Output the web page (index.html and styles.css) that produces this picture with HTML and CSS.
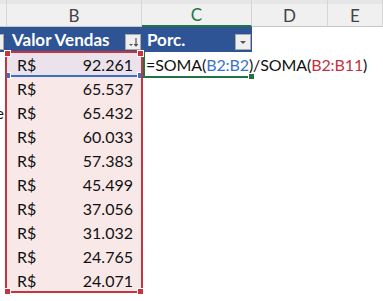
FILE: index.html
```html
<!DOCTYPE html>
<html lang="pt-BR">
<head>
    <meta charset="UTF-8">
    <title>Vendas</title>
    <link rel="stylesheet" href="styles.css">
</head>
<body>
    <div class="sheet">
        <!-- column letters -->
        <div class="row row-cols">
            <div class="col"></div>
            <div class="col">B</div>
            <div class="col col-active">C</div>
            <div class="col">D</div>
            <div class="col">E</div>
        </div>

        <!-- table header -->
        <div class="row row-head">
            <div class="cell th th-edge"><span class="dd"></span></div>
            <div class="cell th">Valor Vendas
                <span class="dd">
                    <svg width="14" height="14" viewBox="0 0 14 14">
                        <path d="M3 9h4l-2 2z" fill="#555"/>
                        <path d="M10 3v8M8.3 9.2L10 11l1.7-1.8" stroke="#444" stroke-width="1.1" fill="none"/>
                    </svg>
                </span>
            </div>
            <div class="cell th">Porc.
                <span class="dd">
                    <svg width="14" height="14" viewBox="0 0 14 14">
                        <path d="M4 6h6l-3 3z" fill="#555"/>
                    </svg>
                </span>
            </div>
            <div class="cell"></div>
            <div class="cell"></div>
        </div>

        <div class="row">
            <div class="cell"></div>
            <div class="cell money money-first"><span>R$</span><span>92.261</span></div>
            <div class="cell formula">=SOMA(<span class="ref-b">B2:B2</span>)/SOMA(<span class="ref-r">B2:B11</span>)</div>
            <div class="cell"></div>
            <div class="cell"></div>
        </div>
        <div class="row">
            <div class="cell"></div>
            <div class="cell money"><span>R$</span><span>65.537</span></div>
            <div class="cell"></div><div class="cell"></div><div class="cell"></div>
        </div>
        <div class="row">
            <div class="cell clip">e</div>
            <div class="cell money"><span>R$</span><span>65.432</span></div>
            <div class="cell"></div><div class="cell"></div><div class="cell"></div>
        </div>
        <div class="row">
            <div class="cell"></div>
            <div class="cell money"><span>R$</span><span>60.033</span></div>
            <div class="cell"></div><div class="cell"></div><div class="cell"></div>
        </div>
        <div class="row">
            <div class="cell"></div>
            <div class="cell money"><span>R$</span><span>57.383</span></div>
            <div class="cell"></div><div class="cell"></div><div class="cell"></div>
        </div>
        <div class="row">
            <div class="cell"></div>
            <div class="cell money"><span>R$</span><span>45.499</span></div>
            <div class="cell"></div><div class="cell"></div><div class="cell"></div>
        </div>
        <div class="row">
            <div class="cell"></div>
            <div class="cell money"><span>R$</span><span>37.056</span></div>
            <div class="cell"></div><div class="cell"></div><div class="cell"></div>
        </div>
        <div class="row">
            <div class="cell"></div>
            <div class="cell money"><span>R$</span><span>31.032</span></div>
            <div class="cell"></div><div class="cell"></div><div class="cell"></div>
        </div>
        <div class="row">
            <div class="cell"></div>
            <div class="cell money"><span>R$</span><span>24.765</span></div>
            <div class="cell"></div><div class="cell"></div><div class="cell"></div>
        </div>
        <div class="row">
            <div class="cell"></div>
            <div class="cell money"><span>R$</span><span>24.071</span></div>
            <div class="cell"></div><div class="cell"></div><div class="cell"></div>
        </div>

        <!-- reference highlights drawn over the grid -->
        <div class="range range-blue">
            <span class="knob knob-bl"></span>
            <span class="knob knob-br"></span>
        </div>
        <div class="range range-red">
            <span class="knob knob-tl"></span>
            <span class="knob knob-tr"></span>
            <span class="knob knob-bl"></span>
            <span class="knob knob-br"></span>
        </div>
        <div class="active-cell">
            <span class="fill-handle"></span>
        </div>
    </div>
</body>
</html>
```

FILE: styles.css
```css
body {
    margin: 0;
    width: 383px;
    height: 301px;
    overflow: hidden;
    background-color: #fff;
    font-family: Lato, "Open Sans", sans-serif;
    font-size: 16px;
    color: #111;
}
.sheet {
    position: relative;
}
.row {
    display: grid;
    grid-template-columns: 7px 135px 110px 76px 1fr;
    height: 24px;
}
.cell {
    display: flex;
    align-items: flex-end;
    padding-bottom: 2px;
    box-sizing: border-box;
    white-space: nowrap;
    min-width: 0;
}

/* column letters */
.row-cols {
    height: 27px;
    background: linear-gradient(#e6e6e6 0, #e6e6e6 4px, #f0f0f0 4px);
}
.col {
    display: flex;
    align-items: center;
    justify-content: center;
    padding-top: 4px;
    box-sizing: border-box;
    font-size: 17px;
    color: #444;
    border-right: 1px solid #d5d5d5;
    border-bottom: 1px solid #c6c6c6;
}
.col-active {
    color: #217346;
    border-bottom: 2px solid #217346;
}

/* table header */
.row-head {
    height: 25px;
}
.th {
    background-color: #2f5496;
    color: #fff;
    font-weight: bold;
    font-size: 17px;
    padding-left: 5px;
    padding-right: 1px;
    justify-content: space-between;
    align-items: flex-end;
}
.th-edge {
    padding: 0 3px 2px 0;
    justify-content: flex-end;
    overflow: hidden;
}
.dd {
    flex: none;
    width: 16px;
    height: 16px;
    box-sizing: border-box;
    background-color: #efefef;
    border: 1px solid #a9a9a9;
    display: flex;
    align-items: center;
    justify-content: center;
}

/* data */
.money {
    justify-content: space-between;
    padding-left: 10px;
    padding-right: 9px;
    background-color: #f9e8e8;
}
.money-first {
    background-color: #ebe2ec;
}
.formula {
    padding-left: 4px;
    overflow: visible;
    position: relative;
    z-index: 1;
    letter-spacing: -0.1px;
}
.ref-b {
    color: #3a72cc;
}
.ref-r {
    color: #c2323d;
}
.clip {
    overflow: hidden;
    justify-content: flex-end;
    padding-right: 3px;
    box-shadow: inset -1px 0 #e39b3a;
}

/* highlighted ranges */
.range {
    position: absolute;
    box-sizing: border-box;
    border: 2px solid;
    z-index: 2;
}
.range-blue {
    left: 5px;
    top: 51px;
    width: 138px;
    height: 26px;
    border-color: #3d6fc6;
}
.range-red {
    left: 5px;
    top: 51px;
    width: 138px;
    height: 242px;
    border-color: #c8343e;
    z-index: 3;
}
.range-blue .knob {
    background-color: #3d6fc6;
}
.range-red .knob {
    background-color: #c8343e;
}
.knob {
    position: absolute;
    width: 5px;
    height: 5px;
    border: 1px solid #fff;
}
.knob-tl { left: -3px; top: -3px; }
.knob-tr { right: -3px; top: -3px; }
.knob-bl { left: -3px; bottom: -4px; }
.knob-br { right: -3px; bottom: -4px; }

.active-cell {
    position: absolute;
    left: 143px;
    top: 51px;
    width: 106px;
    height: 27px;
    box-sizing: border-box;
    border-left: 2px solid #217346;
    border-bottom: 2px solid #217346;
    z-index: 2;
}
.fill-handle {
    position: absolute;
    right: -6px;
    bottom: -4px;
    width: 5px;
    height: 5px;
    background-color: #217346;
    border: 1px solid #fff;
}
```
